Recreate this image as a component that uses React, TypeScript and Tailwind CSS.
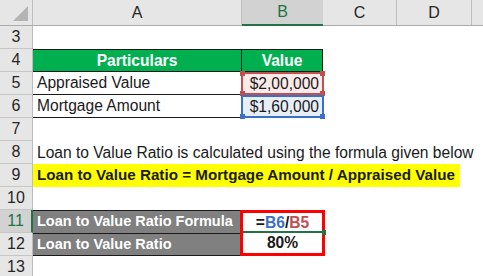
import type { ReactNode } from 'react';

const font = { fontFamily: '"Liberation Sans", Arial, sans-serif' };

function RowHead({ n, active }: { n: number; active?: boolean }) {
  return (
    <div
      className={
        active
          ? 'w-[33px] shrink-0 h-full flex items-center justify-center bg-[#d2d2d2] text-[#217346] border-b border-[#c6c6c6] border-r-2 border-r-[#217346] text-[16px]'
          : 'w-[33px] shrink-0 h-full flex items-center justify-center bg-[#e6e6e6] text-[#262626] border-b border-[#c6c6c6] border-r border-r-[#bcbcbc] text-[16px]'
      }
    >
      {n}
    </div>
  );
}

function Row({ n, active, children }: { n: number; active?: boolean; children?: ReactNode }) {
  return (
    <div className="flex h-[23px]">
      <RowHead n={n} active={active} />
      {children}
    </div>
  );
}

function Handle({ pos, color }: { pos: string; color: string }) {
  return <span className={`absolute w-[5px] h-[5px] ${pos} ${color}`} />;
}

export default function App() {
  return (
    <div className="w-[483px] h-[276px] overflow-hidden bg-white text-[#1a1a1a] text-[15.6px]" style={font}>
      {/* column headers */}
      <div className="flex h-[26px] bg-[#e6e6e6] border-b border-[#ababab]">
        <div className="w-[33px] shrink-0 border-r border-[#bcbcbc] flex items-end justify-end pr-[3px] pb-[3px]">
          <svg width="16" height="16" viewBox="0 0 16 16">
            <polygon points="15,0 15,15 0,15" fill="#b4b4b4" />
          </svg>
        </div>
        <div className="w-[209px] shrink-0 border-r border-[#bcbcbc] flex items-center justify-center text-[16px] text-[#262626]">A</div>
        <div className="w-[81px] shrink-0 bg-[#d2d2d2] border-b-2 border-[#217346] -mb-[1px] flex items-center justify-center text-[16px] text-[#217346]">B</div>
        <div className="w-[74px] shrink-0 border-r border-[#bcbcbc] flex items-center justify-center text-[16px] text-[#262626]">C</div>
        <div className="w-[75px] shrink-0 border-r border-[#bcbcbc] flex items-center justify-center text-[16px] text-[#262626]">D</div>
        <div className="flex-1" />
      </div>

      <Row n={3} />

      <Row n={4}>
        <div className="w-[209px] shrink-0 bg-[#00b050] border-t border-b border-r border-[#1a1a1a] flex items-center justify-center font-bold text-white">
          Particulars
        </div>
        <div className="w-[81px] shrink-0 bg-[#00b050] border-t border-b border-r border-[#1a1a1a] flex items-center justify-center font-bold text-white">
          Value
        </div>
      </Row>

      <Row n={5}>
        <div className="w-[209px] shrink-0 border-b border-[#1a1a1a] flex items-center pl-[4px]">Appraised Value</div>
        <div className="relative w-[83px] -ml-[1px] shrink-0 bg-[#fbeaea] border-2 border-[#c0504d] flex items-center justify-end pr-[3px]">
          $2,00,000
          <Handle pos="-left-[3px] -top-[3px]" color="bg-[#c0504d]" />
          <Handle pos="-right-[3px] -top-[3px]" color="bg-[#c0504d]" />
          <Handle pos="-left-[3px] -bottom-[3px]" color="bg-[#c0504d]" />
          <Handle pos="-right-[3px] -bottom-[3px]" color="bg-[#c0504d]" />
        </div>
      </Row>

      <Row n={6}>
        <div className="w-[209px] shrink-0 border-b border-[#1a1a1a] flex items-center pl-[4px]">Mortgage Amount</div>
        <div className="relative w-[83px] -ml-[1px] shrink-0 bg-[#e8eef8] border-2 border-[#3a70c8] flex items-center justify-end pr-[3px]">
          $1,60,000
          <Handle pos="-left-[3px] -bottom-[3px]" color="bg-[#3a70c8]" />
          <Handle pos="-right-[3px] -bottom-[3px]" color="bg-[#3a70c8]" />
        </div>
      </Row>

      <Row n={7} />

      <Row n={8}>
        <div className="pl-[4px] flex items-center whitespace-nowrap">
          Loan to Value Ratio is calculated using the formula given below
        </div>
      </Row>

      <Row n={9}>
        <div className="w-[427px] shrink-0 bg-[#ffff00] flex items-center pl-[4px] whitespace-nowrap font-bold text-[15.2px]">
          Loan to Value Ratio = Mortgage Amount / Appraised Value
        </div>
      </Row>

      <Row n={10} />

      <Row n={11} active>
        <div className="w-[209px] shrink-0 bg-[#808080] border-t border-[#1a1a1a] flex items-center pl-[4px] font-bold text-white text-[14.5px] whitespace-nowrap overflow-hidden">
          Loan to Value Ratio Formula
        </div>
        <div className="relative w-[85px] -ml-[2px] shrink-0 border-t-[3px] border-x-[3px] border-[#ff0000] flex items-center justify-center font-bold">
          <span>=</span>
          <span className="text-[#3a70c8]">B6</span>
          <span>/</span>
          <span className="text-[#c0504d]">B5</span>
          <span className="absolute left-0 right-0 bottom-0 h-[2px] bg-[#217346]" />
          <span className="absolute -right-[4px] -bottom-[2px] w-[4px] h-[5px] bg-[#217346]" />
        </div>
      </Row>

      <Row n={12}>
        <div className="w-[209px] shrink-0 bg-[#808080] border-t border-b border-[#1a1a1a] flex items-center pl-[4px] font-bold text-white text-[14.5px] whitespace-nowrap">
          Loan to Value Ratio
        </div>
        <div className="w-[85px] -ml-[2px] shrink-0 border-b-[3px] border-x-[3px] border-[#ff0000] flex items-center justify-center font-bold">
          80%
        </div>
      </Row>

      <Row n={13} />
    </div>
  );
}
